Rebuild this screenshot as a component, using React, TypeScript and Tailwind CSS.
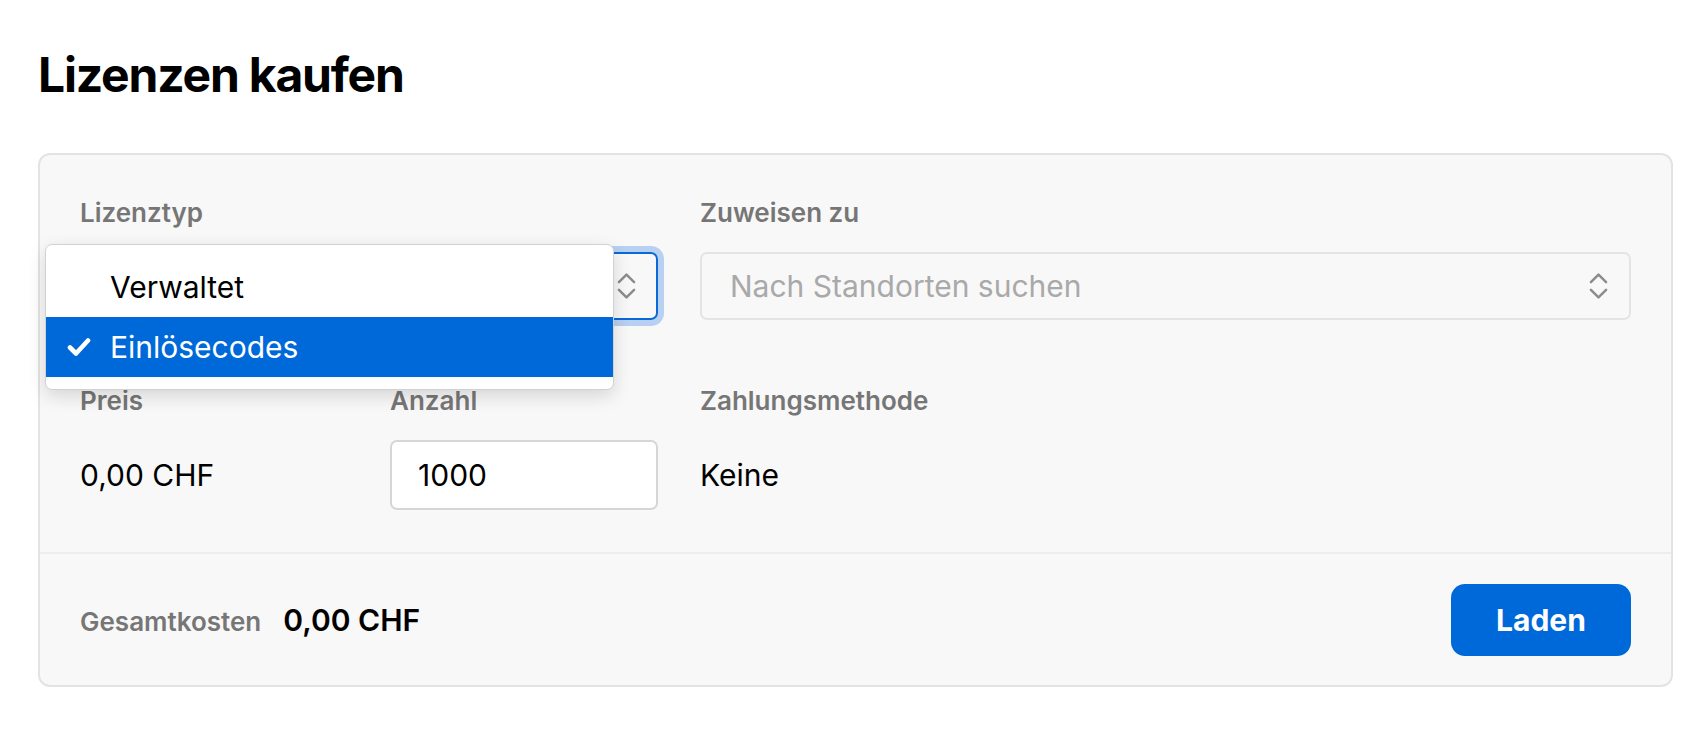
import { useState } from 'react'

const options = ['Verwaltet', 'Einlösecodes']

function UpDown({ className }: { className?: string }) {
  return (
    <svg viewBox="0 0 20 28" className={className} fill="none" stroke="currentColor" strokeWidth="2.6" strokeLinecap="round" strokeLinejoin="round">
      <path d="M2 10 L10 2 L18 10" />
      <path d="M2 18 L10 26 L18 18" />
    </svg>
  )
}

function Check() {
  return (
    <svg viewBox="0 0 24 20" className="w-[24px] h-[20px]" fill="none" stroke="currentColor" strokeWidth="4.6" strokeLinecap="round" strokeLinejoin="round">
      <path d="M3 10.5 L9 16.5 L21 3.5" />
    </svg>
  )
}

export default function App() {
  const [selected, setSelected] = useState('Einlösecodes')

  return (
    <div className="min-h-screen bg-white pl-[38px] pr-[33px] pt-[46px] font-[Inter,'Noto_Sans',sans-serif] text-black">
      <h1 className="text-[48px] leading-[58px] font-bold tracking-[-0.025em] mb-[49px]">Lizenzen kaufen</h1>

      <div className="border-2 border-[#e3e3e3] rounded-[12px] bg-[#f8f8f8]">
        <div className="grid grid-cols-[268px_268px_1fr] gap-x-[42px] gap-y-[65px] px-[40px] pt-[42px] pb-[42px]">
          {/* Lizenztyp */}
          <div className="col-span-2">
            <label className="block text-[26px] leading-[32px] font-semibold text-[#767676] mb-[23px]">Lizenztyp</label>
            <div className="relative">
              <div className="h-[68px] rounded-[7px] border-2 border-[#0a69d6] ring-[6px] ring-[#b8d0f1] flex items-center justify-end pr-[20px]">
                <UpDown className="w-[19px] h-[28px] text-[#8c8c8c]" />
              </div>
              <div className="absolute left-[-35px] top-[-8px] w-[569px] bg-white border border-[#d2d2d2] rounded-[7px] shadow-[0_6px_18px_rgba(0,0,0,0.14)] pt-[12px] pb-[12px] overflow-hidden">
                {options.map((o) => {
                  const active = o === selected
                  return (
                    <div
                      key={o}
                      onClick={() => setSelected(o)}
                      className={`h-[60px] flex items-center text-[30px] ${active ? 'bg-[#0069d9] text-white' : 'text-black'}`}
                    >
                      <span className="w-[64px] flex justify-end pr-[19px]">{active && <Check />}</span>
                      {o}
                    </div>
                  )
                })}
              </div>
            </div>
          </div>

          {/* Zuweisen zu */}
          <div>
            <label className="block text-[26px] leading-[32px] font-semibold text-[#767676] mb-[23px]">Zuweisen zu</label>
            <div className="h-[68px] rounded-[7px] border-2 border-[#e4e4e4] flex items-center justify-between pl-[28px] pr-[21px]">
              <span className="text-[30px] text-[#a9a9a9]">Nach Standorten suchen</span>
              <UpDown className="w-[19px] h-[28px] text-[#8c8c8c]" />
            </div>
          </div>

          {/* Preis */}
          <div>
            <label className="block text-[26px] leading-[32px] font-semibold text-[#767676] mb-[23px]">Preis</label>
            <div className="h-[70px] flex items-center text-[30px]">0,00 CHF</div>
          </div>

          {/* Anzahl */}
          <div>
            <label className="block text-[26px] leading-[32px] font-semibold text-[#767676] mb-[23px]">Anzahl</label>
            <input
              defaultValue="1000"
              className="block w-full h-[70px] bg-white border-2 border-[#d6d6d6] rounded-[7px] pl-[26px] text-[30px] outline-none"
            />
          </div>

          {/* Zahlungsmethode */}
          <div>
            <label className="block text-[26px] leading-[32px] font-semibold text-[#767676] mb-[23px]">Zahlungsmethode</label>
            <div className="h-[70px] flex items-center text-[30px]">Keine</div>
          </div>
        </div>

        <div className="border-t-2 border-[#ededed] flex items-center justify-between px-[40px] pt-[30px] pb-[29px]">
          <div className="flex items-baseline gap-[22px]">
            <span className="text-[26px] font-semibold text-[#767676]">Gesamtkosten</span>
            <span className="text-[30px] font-semibold">0,00 CHF</span>
          </div>
          <button className="w-[180px] h-[72px] rounded-[14px] bg-[#0069d9] text-white text-[30px] font-bold">Laden</button>
        </div>
      </div>
    </div>
  )
}
